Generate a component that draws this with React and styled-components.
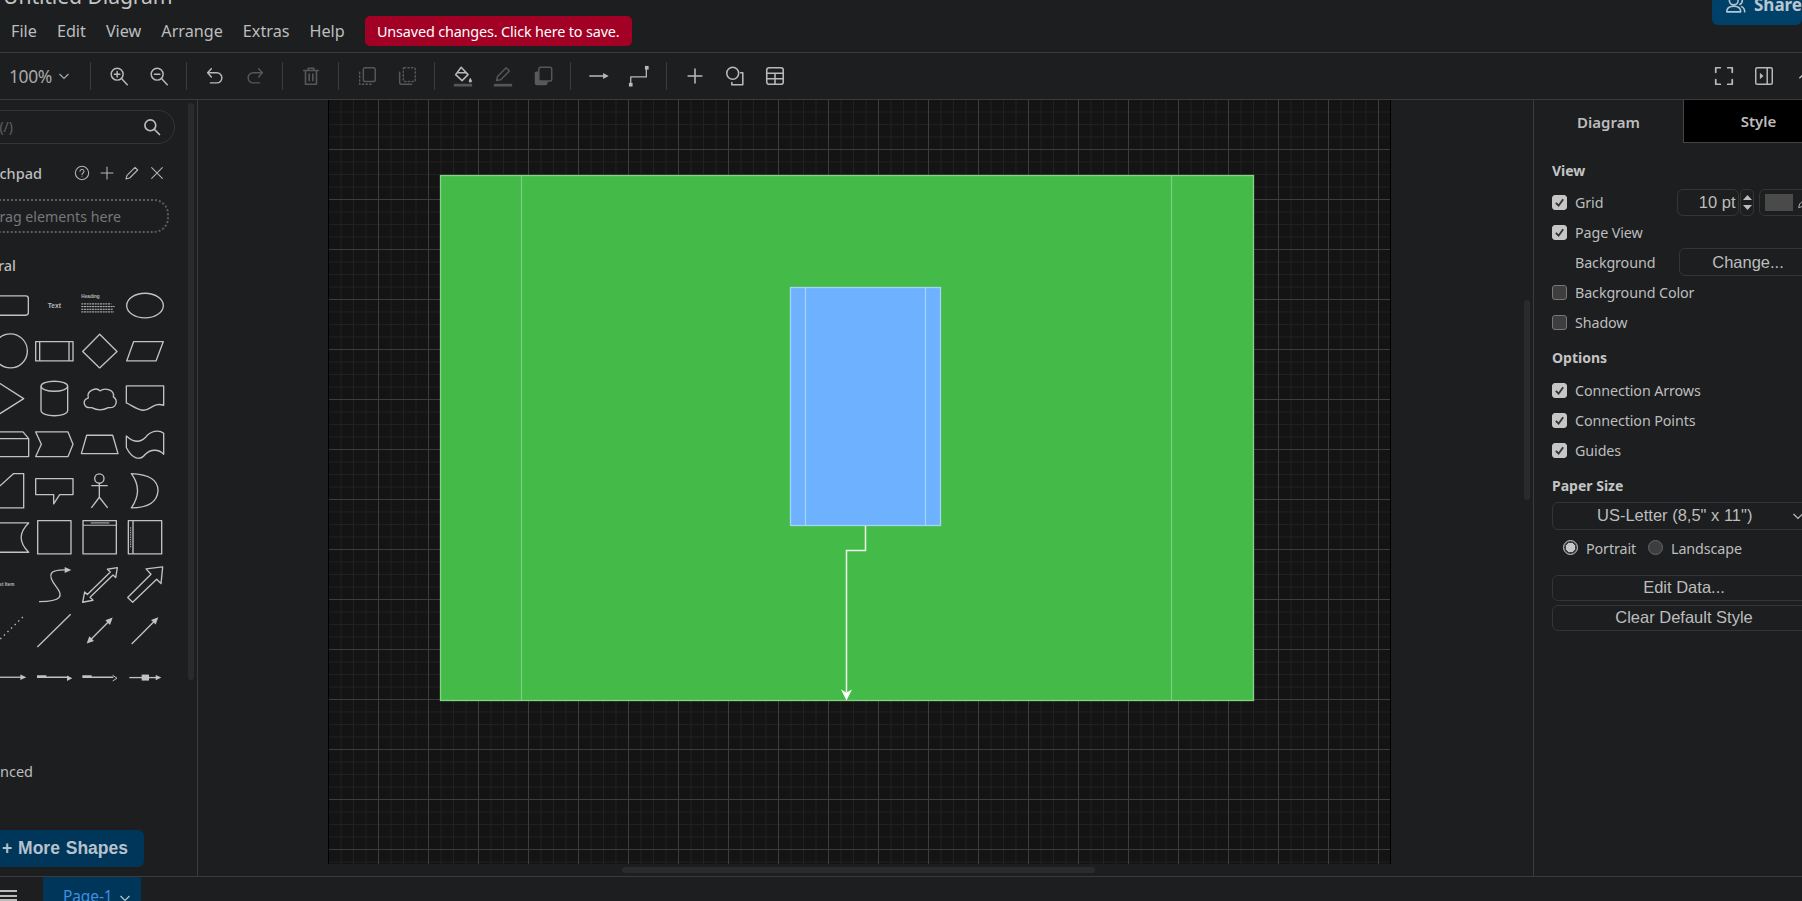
import React from "react";
import styled, { createGlobalStyle } from "styled-components";

const UI = `"Noto Sans", "Open Sans", sans-serif`;
const ARIAL = `"Liberation Sans", Arial, sans-serif`;
const LINE = "#3a3b3d";
const BG = "#1c1e20";

const Global = createGlobalStyle`
  html, body { margin: 0; padding: 0; height: 100%; background: ${BG}; overflow: hidden; }
  #root { height: 100%; }
  * { box-sizing: border-box; }
`;

const Shell = styled.div`
  width: 1802px; height: 901px; overflow: hidden; display: flex; flex-direction: column;
  background: ${BG}; color: #bdbdbd; font-family: ${UI};
`;
const Header = styled.header`
  height: 53px; flex: none; border-bottom: 1px solid ${LINE};
`;
const TopRow = styled.div`
  height: 32px; margin-top: -16px; display: flex; align-items: flex-start; padding-left: 3px;
`;
const Title = styled.div`
  font-size: 21.2px; line-height: 24px; color: #c4c4c4; letter-spacing: -0.1px;
`;
const Share = styled.div`
  margin-left: auto; width: 90px; height: 40.5px; flex: none; background: #00416a; border-radius: 0 0 6px 6px;
  display: flex; align-items: center; gap: 8px; padding-left: 13px; color: #b9c6d0;
  font: bold 17px ${UI}; margin-right: 0;
`;
const MenuRow = styled.nav`
  height: 30px; display: flex; align-items: center; padding-left: 11px;
`;
const MenuItem = styled.span`
  font-size: 16.2px; color: #bdbdbd; margin-right: 20px; letter-spacing: 0;
`;
const SaveBtn = styled.button`
  height: 30px; width: 267px; margin-left: 0; border: 0; border-radius: 5px; background: #a20025; color: #fff;
  font: 14.4px ${UI}; letter-spacing: -0.15px; white-space: nowrap; padding: 0;
`;
const Toolbar = styled.div`
  height: 47px; flex: none; border-bottom: 1px solid ${LINE}; display: flex; align-items: center; padding-left: 9px;
`;
const ZoomLabel = styled.div`
  width: 73.5px; display: flex; align-items: center; gap: 6px; font-size: 17.5px; color: #a8a8a8; letter-spacing: -0.4px;
`;
const Sep = styled.i`
  width: 1px; height: 28px; background: ${LINE}; margin: 0 7.5px; flex: none;
`;
const ToolBtn = styled.span`
  width: 40px; height: 30px; display: flex; align-items: center; justify-content: center; flex: none;
  color: ${(p) => (p.$off ? "#565758" : "#b9b9b9")};
`;
const ToolEnd = styled.div`
  margin-left: auto; display: flex; margin-right: -22px;
`;
const Main = styled.div`
  height: 776px; flex: none; display: flex;
`;
const Sidebar = styled.aside`
  width: 198px; flex: none; border-right: 1px solid ${LINE}; position: relative; overflow: hidden; padding-top: 10px;
`;
const SideScroll = styled.div`
  position: absolute; left: 188px; top: 3px; width: 6px; height: 577px; background: #2a2b2d; border-radius: 3px;
`;
const Search = styled.div`
  margin-left: -40px; width: 215px; height: 33.5px; border: 1px solid #343537; border-radius: 17px;
  display: flex; align-items: center; justify-content: space-between; padding-right: 12px;
`;
const Placeholder = styled.span`
  width: 52px; white-space: nowrap; font-size: 14px; color: #5f6062; display: flex; justify-content: flex-end;
`;
const SectionRow = styled.div`
  margin-left: -40px; margin-top: ${(p) => p.$top}px; height: ${(p) => p.$h}px; display: flex; align-items: center;
`;
const SectionName = styled.div`
  width: ${(p) => p.$w}px; flex: none; display: flex; justify-content: flex-end; white-space: nowrap;
  font-size: 14.5px; font-weight: ${(p) => (p.$thin ? 400 : 500)}; color: #bdbdbd;
`;
const PadTools = styled.div`
  display: flex; margin-left: 27px; color: #b4b4b4;
`;
const PadTool = styled.span`
  width: 25px; height: 20px; display: flex; align-items: center; justify-content: center;
`;
const DragBox = styled.div`
  margin: 14px 0 0 -40px; width: 209px; height: 34px; border: 2px dotted #5c5d5f; border-radius: 15px;
  display: flex; align-items: center; justify-content: flex-end; padding-right: 46px; font-size: 14.2px; color: #77787a; white-space: nowrap;
`;
const ShapeGrid = styled.div`
  margin: 6.75px 0 0 -12.35px; display: grid; grid-template-columns: repeat(4, 44.7px); grid-auto-rows: 46.5px;
`;
const ShapeCell = styled.svg`
  width: 44.7px; height: 46.5px; overflow: visible; fill: none; stroke: #c2c2c2; stroke-width: 4; stroke-linejoin: round;
`;
const MoreBtn = styled.div`
  margin: 49px 0 0 -40px; width: 184px; height: 37px; background: #00365a; border-radius: 6px; display: flex; align-items: center;
  padding-left: 42px; font: bold 17.5px ${ARIAL}; word-spacing: 1px; color: #b6c2cc; white-space: nowrap;
`;
const Canvas = styled.section`
  flex: 1; min-width: 0; position: relative; overflow: hidden; padding-left: 130px;
`;
const Page = styled.div`
  width: 1063px; height: 764px; position: relative; background-color: #141414;
  border-left: 1px solid #000; border-right: 1px solid #000;
  background-image:
    linear-gradient(#3c3c3c 1px, transparent 1px),
    linear-gradient(90deg, #3c3c3c 1px, transparent 1px),
    linear-gradient(#212121 1px, transparent 1px),
    linear-gradient(90deg, #212121 1px, transparent 1px);
  background-size: 50px 50px, 50px 50px, 12.5px 12.5px, 12.5px 12.5px;
  background-position: 0 49px, 49px 0, 0 49px, 49px 0;
`;
const Diagram = styled.svg`
  position: absolute; left: 0; top: 0; width: 1061px; height: 764px;
`;
const VScroll = styled.div`
  position: absolute; left: 1326px; top: 200px; width: 6px; height: 200px; background: #2a2b2d; border-radius: 3px;
`;
const HScroll = styled.div`
  position: absolute; left: 424px; top: 767px; width: 473px; height: 6px; background: #2a2b2d; border-radius: 3px;
`;
const Panel = styled.aside`
  flex: none; width: 269px; border-left: 1px solid ${LINE}; overflow: hidden;
`;
const Tabs = styled.div`
  display: flex; height: 43px;
`;
const Tab = styled.div`
  width: ${(p) => p.$w}px; flex: none; display: flex; align-items: center; justify-content: center; font-size: 15px; font-weight: 600; color: #bdbdbd;
  ${(p) => p.$active ? `background: #000; border-left: 1px solid #444; border-bottom: 1px solid #444;` : ""}
`;
const Body = styled.div`
  padding-left: 18px; width: 300px; font-size: 14.3px;
`;
const Heading = styled.div`
  height: 20px; line-height: 20px; margin-top: ${(p) => p.$top}px; font-weight: 700; font-size: 14px; color: #c4c4c4;
`;
const Row = styled.div`
  height: 30px; display: flex; align-items: center; margin-top: ${(p) => p.$top || 0}px; color: #bdbdbd;
`;
const Check = styled.span`
  width: 15px; height: 15px; flex: none; border-radius: 3px; margin-right: 8px; display: flex; align-items: center; justify-content: center;
  background: ${(p) => (p.$on ? "#c6c6c6" : "#3e3e3e")}; border: 1px solid ${(p) => (p.$on ? "#c6c6c6" : "#777")};
`;
const Label = styled.span`
  padding-left: ${(p) => p.$pad || 0}px; width: ${(p) => (p.$w ? `${p.$w}px` : "auto")}; flex: none; white-space: nowrap; letter-spacing: -0.1px;
`;
const NumInput = styled.div`
  width: 61.5px; height: 27px; margin-left: ${(p) => p.$left}px; border: 1px solid #343537; border-radius: 6px; font: 16.5px ${ARIAL}; color: #bdbdbd;
  display: flex; align-items: center; justify-content: flex-end; padding-right: 2px;
`;
const Spin = styled.div`
  width: 14px; height: 27px; margin-left: 1.5px; border: 1px solid #343537; border-radius: 5px; display: flex; flex-direction: column; align-items: center; justify-content: center; gap: 5px;
`;
const ColorBox = styled.div`
  width: 60px; height: 27px; margin-left: 5px; border: 1px solid #343537; border-radius: 6px; padding: 4px 5px; display: flex; gap: 4px; align-items: center;
`;
const Swatch = styled.span`
  width: 28px; height: 17px; background: #4a4a4a; flex: none;
`;
const WideBtn = styled.div`
  width: ${(p) => p.$w || 264}px; height: ${(p) => p.$h || 26}px; margin-top: ${(p) => p.$top || 0}px; flex: none;
  border: 1px solid #343537; border-radius: 6px; display: flex; align-items: center; justify-content: center;
  font: 16.5px ${ARIAL}; color: #bdbdbd; white-space: nowrap;
`;
const SelectBox = styled(WideBtn)`
  justify-content: flex-start; padding-left: 44px; gap: 40px;
`;
const RadioRow = styled.div`
  height: 30px; margin-top: 4.4px; display: flex; align-items: center; padding-left: 11px; font-size: 14.3px; letter-spacing: -0.1px;
`;
const Radio = styled.span`
  width: 15px; height: 15px; flex: none; border-radius: 50%; margin: -3px 8px 0 ${(p) => p.$left || 0}px;
  background: ${(p) => (p.$on ? "radial-gradient(circle, #c6c6c6 0 4.5px, #3e3e3e 5px)" : "#3e3e3e")};
  border: 1px solid ${(p) => (p.$on ? "#c6c6c6" : "#666")};
`;
const Footer = styled.footer`
  flex: 1; border-top: 1px solid ${LINE}; display: flex; overflow: hidden; position: relative;
`;
const Burger = styled.div`
  width: 17px; margin-top: 13px; height: 11px; flex: none;
  border-top: 2px solid #bbb; border-bottom: 2px solid #bbb; position: relative;
  &::after { content: ""; position: absolute; left: 0; right: 0; top: 2.5px; height: 2px; background: #bbb; }
`;
const PageTab = styled.div`
  margin-left: 26px; width: 98px; height: 30px; background: #00365a; color: #3f8fe0; font-size: 15.5px; letter-spacing: -0.1px;
  display: flex; align-items: flex-start; padding: 9px 0 0 20px; gap: 6px; line-height: 20px;
`;
const TabChevron = styled.span`
  display: flex; margin-top: 6px; color: #b6c2cc;
`;

const Ic = ({ w = 22, h = 22, sw = 1.6, children, fill = "none" }) => (
  <svg width={w} height={h} viewBox="0 0 24 24" fill={fill} stroke="currentColor" strokeWidth={sw} strokeLinecap="round" strokeLinejoin="round">{children}</svg>
);
const Chev = ({ size = 12, up, c = "currentColor" }) => (
  <svg width={size} height={size} viewBox="0 0 12 12" fill="none" stroke={c} strokeWidth="1.2">
    <path d={up ? "M2 8l4-4 4 4" : "M1.5 4l4.5 4.5L10.5 4"} />
  </svg>
);
const Tick = () => (
  <svg width="11" height="11" viewBox="0 0 12 12" fill="none" stroke="#333" strokeWidth="2"><path d="M2 6.500l3 3 5-7" /></svg>
);

const tools = {
  zoomIn: <Ic><circle cx="10" cy="10" r="6.5" /><path d="M15 15l6 6.5M10 7v6M7 10h6" /></Ic>,
  zoomOut: <Ic><circle cx="10" cy="10" r="6.5" /><path d="M15 15l6 6.5M7 10h6" /></Ic>,
  undo: <Ic><path d="M8 4L4 8.500l4 4.500" /><path d="M4.500 8.500H14a5.500 5.500 0 0 1 0 11H7" /></Ic>,
  redo: <Ic><path d="M16 4l4 4.500-4 4.500" /><path d="M19.500 8.500H10a5.500 5.500 0 0 0 0 11h7" /></Ic>,
  trash: <Ic sw={1.8}><path d="M4 6h16M9 6V3.500h6V6M6 6v15h12V6M10 10v7M14 10v7" /></Ic>,
  front: <Ic><rect x="8" y="3" width="13" height="15" rx="2" /><path d="M4 8v13h13" strokeDasharray="1.5 2.500" /></Ic>,
  back: <Ic><rect x="8" y="3" width="13" height="15" rx="1" strokeDasharray="1.500 2.500" /><path d="M4 8v11a2 2 0 0 0 2 2h11" /></Ic>,
  fill: <Ic sw={1.7}><path d="M10 2.500l7.500 8-6.500 6.500-7-6.500z" /><path d="M6.500 8.500h9" /><path d="M20 14c1 1.800 1.700 2.600 1.700 3.500a1.700 1.700 0 0 1-3.400 0c0-.9.700-1.700 1.700-3.500z" fill="currentColor" stroke="none" /><rect x="2" y="20.500" width="20" height="3" fill="#555" stroke="none" /></Ic>,
  line: <Ic><path d="M5 17l1-4.500L15.500 3l3.500 3.500L9.500 16z" /><rect x="2" y="20.500" width="20" height="3" fill="#555" stroke="none" /></Ic>,
  shadow: <Ic><rect x="3" y="7" width="14" height="15" rx="2" fill="#5a5a5a" stroke="none" /><rect x="7.500" y="2.500" width="14" height="15" rx="2" fill="#1c1e20" /></Ic>,
  arrow: <Ic sw={1.6}><path d="M2 12h17" /><path d="M22.500 12l-6 3.200v-6.400z" fill="currentColor" stroke="none" /></Ic>,
  way: <Ic sw={1.4}><path d="M3 21v-8h17V3" /><rect x="1" y="19.500" width="4" height="4" fill="currentColor" stroke="none" /><rect x="18.500" y="1" width="4" height="4" fill="currentColor" stroke="none" /></Ic>,
  plus: <Ic sw={1.7}><path d="M12 4.500v15M4.500 12h15" /></Ic>,
  shape: <Ic sw={1.7}><circle cx="9.500" cy="9" r="6.500" /><path d="M18 8.500h2.500v13H8.500V19" /></Ic>,
  table: <Ic sw={1.7}><rect x="3" y="3" width="18" height="18" rx="2.500" /><path d="M3 9h18M3 15h18M12 9v12" /></Ic>,
  full: <Ic sw={1.9}><path d="M3 8V3h5M16 3h5v5M21 16v5h-5M8 21H3v-5" /></Ic>,
  side: <Ic sw={1.6}><rect x="3" y="3" width="18" height="18" rx="1.500" /><path d="M15.500 3v18" /><path d="M7.500 8.500l4 3.500-4 3.500z" fill="currentColor" stroke="none" /></Ic>,
};

const cols = [30, 164, 298, 432];
const Shape = ({ row, col, children }) => {
  const ys = [615, 757, 894, 135, 275, 415, 552, 692, 830];
  return <ShapeCell viewBox={`${cols[col] - 67} ${ys[row] - 69.75} 134 139.5`}>{children}</ShapeCell>;
};
const Head = ({ pts, open }) => open
  ? <polyline points={pts} strokeWidth="3" />
  : <polygon points={pts} fill="#c2c2c2" stroke="none" />;
const tiny = { fill: "#b8b8b8", stroke: "none", fontFamily: ARIAL };

const shapes = [
  <rect x="-30" y="587" width="114" height="58" rx="8" />,
  <text x="164" y="622" textAnchor="middle" fontSize="20" fontWeight="700" style={tiny}>Text</text>,
  <g><text x="244" y="594" fontSize="14" fontWeight="700" style={tiny}>Heading</text><path d="M244 611h90M244 619h100M244 627h95M244 635h98" strokeWidth="3" strokeDasharray="6 2" /></g>,
  <ellipse cx="434" cy="616" rx="55" ry="37" />,
  <circle cx="30" cy="756" r="51" />,
  <g><rect x="108" y="728" width="112" height="58" /><path d="M120 728v58M208 728v58" /></g>,
  <polygon points="299,706 351,758 299,807 248,758" />,
  <polygon points="400,728 489,728 467,786 379,786" />,
  <polygon points="-40,825 70,895 -40,965" />,
  <g><path d="M124 858v72c0 22 80 22 80 0v-72" /><ellipse cx="164" cy="858" rx="40" ry="15" /></g>,
  <path d="M275 922C250 925 245 900 265 893C258 870 290 860 300 872C315 860 345 870 340 890C355 900 350 925 325 922C310 930 290 930 275 922Z" />,
  <path d="M378 857H490V915C460 905 450 930 430 930C410 930 395 915 378 908Z" />,
  <path d="M-30 98H68L85 118V172H-30ZM-30 118H85" />,
  <polygon points="108,98 205,98 220,135 205,172 108,172 125,135" />,
  <polygon points="260,108 338,108 354,163 244,163" />,
  <path d="M378 110C400 130 420 130 435 115C450 95 475 90 490 102V165C475 148 450 150 435 165C420 185 395 180 378 145Z" />,
  <polygon points="40,222 70,222 70,325 -30,325 -30,258 0,258" />,
  <polygon points="108,237 220,237 220,285 180,285 162,313 162,285 108,285" />,
  <g><circle cx="298" cy="237" r="14" /><path d="M298 251v42M274 258h49M274 325l24-32 25 32" /></g>,
  <path d="M393 222Q473 225 473 273Q470 325 393 325Q430 272 393 222Z" />,
  <path d="M-30 372H85Q40 416 85 460H-30Z" />,
  <rect x="114" y="365" width="100" height="100" />,
  <g><rect x="249" y="365" width="100" height="100" /><path d="M249 379h100M272 372h56" strokeWidth="3" /></g>,
  <g><rect x="384" y="365" width="100" height="100" /><path d="M398 365v100" /><path d="M391 385v60" strokeWidth="3" strokeDasharray="4 3" /></g>,
  <text x="42" y="556" textAnchor="end" fontSize="14" fontWeight="700" style={tiny}>List Item</text>,
  <g><path d="M118 604C190 604 190 585 170 560C140 520 150 508 200 509" /><Head pts="195,500 215,509 195,518" /></g>,
  <polygon points="352,502 347,532 339,524 270,591 279,600 248,606 254,575 262,583 331,515 322,507" />,
  <polygon points="487,500 482,550 469,537 397,606 382,592 452,522 437,506" />,
  <path d="M0 718L70 650" strokeDasharray="4 11" />,
  <path d="M113 742L213 644" />,
  <g><path d="M265 727L333 659" /><Head pts="338,654 330,676 316,662" /><Head pts="260,732 268,710 282,724" /></g>,
  <g><path d="M394 733L468 659" /><Head pts="474,653 466,675 452,661" /></g>,
  <g><path d="M-20 830H65" /><Head pts="78,830 60,822 60,838" /></g>,
  <g><path d="M112 826H140M112 830H205" /><Head pts="218,833 202,825 202,841" /></g>,
  <g><path d="M247 826H275M247 830H340" /><Head open pts="338,824 351,833 338,841" /></g>,
  <g><path d="M387 831H470" /><rect x="424" y="822" width="22" height="18" fill="#c2c2c2" stroke="none" /><Head pts="483,831 466,823 466,839" /></g>,
];

const Box = ({ on, top, children }) => (
  <Row $top={top}>
    <Check $on={on}>{on && <Tick />}</Check>
    <Label>{children}</Label>
  </Row>
);

export default function App() {
  return (
    <Shell>
      <Global />
      <Header>
        <TopRow>
          <Title>Untitled Diagram</Title>
          <Share>
            <Ic w={22} h={22} sw={1.8}><circle cx="10" cy="8" r="5" /><path d="M2 21c0-4.500 3.500-6.500 8-6.500s8 2 8 6.500zM17 3.500a5 5 0 0 1 0 9M19 15c2.500 1 3.500 3 3.500 6" /></Ic>
            Share
          </Share>
        </TopRow>
        <MenuRow>
          {["File", "Edit", "View", "Arrange", "Extras", "Help"].map((m) => <MenuItem key={m}>{m}</MenuItem>)}
          <SaveBtn>Unsaved changes. Click here to save.</SaveBtn>
        </MenuRow>
      </Header>
      <Toolbar>
        <ZoomLabel>100% <Chev size={12} /></ZoomLabel>
        <Sep />
        <ToolBtn>{tools.zoomIn}</ToolBtn><ToolBtn>{tools.zoomOut}</ToolBtn>
        <Sep />
        <ToolBtn>{tools.undo}</ToolBtn><ToolBtn $off>{tools.redo}</ToolBtn>
        <Sep />
        <ToolBtn $off>{tools.trash}</ToolBtn>
        <Sep />
        <ToolBtn $off>{tools.front}</ToolBtn><ToolBtn $off>{tools.back}</ToolBtn>
        <Sep />
        <ToolBtn>{tools.fill}</ToolBtn><ToolBtn $off>{tools.line}</ToolBtn><ToolBtn $off>{tools.shadow}</ToolBtn>
        <Sep />
        <ToolBtn>{tools.arrow}</ToolBtn><ToolBtn>{tools.way}</ToolBtn>
        <Sep />
        <ToolBtn>{tools.plus}</ToolBtn><ToolBtn>{tools.shape}</ToolBtn><ToolBtn>{tools.table}</ToolBtn>
        <ToolEnd>
          <ToolBtn>{tools.full}</ToolBtn><ToolBtn>{tools.side}</ToolBtn><ToolBtn><Chev size={14} up /></ToolBtn>
        </ToolEnd>
      </Toolbar>
      <Main>
        <Sidebar>
          <SideScroll />
          <Search>
            <Placeholder><span>Search Shapes (/)</span></Placeholder>
            <Ic w={20} h={20} sw={2}><circle cx="10" cy="10" r="6.500" /><path d="M15 15l6 6" /></Ic>
          </Search>
          <SectionRow $top={17.5} $h={24}>
            <SectionName $w={82}>Scratchpad</SectionName>
            <PadTools>
              <PadTool><Ic w={16} h={16} sw={1.6}><circle cx="12" cy="12" r="10" /><path d="M9 9.500a3 3 0 1 1 4.500 2.600c-1 .6-1.500 1.200-1.500 2.400M12 17.500v.2" /></Ic></PadTool>
              <PadTool><Ic w={16} h={16} sw={1.6}><path d="M12 3v18M3 12h18" /></Ic></PadTool>
              <PadTool><Ic w={16} h={16} sw={1.7}><path d="M3 21l1.500-5.500L16.500 3.500l4 4L8.500 19.500z" /></Ic></PadTool>
              <PadTool><Ic w={16} h={16} sw={1.6}><path d="M4 4l16 16M20 4L4 20" /></Ic></PadTool>
            </PadTools>
          </SectionRow>
          <DragBox>Drag elements here</DragBox>
          <SectionRow $top={22} $h={20}><SectionName $w={56}>General</SectionName></SectionRow>
          <ShapeGrid>
            {shapes.map((s, i) => <Shape key={i} row={Math.floor(i / 4)} col={i % 4}>{s}</Shape>)}
          </ShapeGrid>
          <SectionRow $top={61} $h={20}><SectionName $w={73} $thin>Advanced</SectionName></SectionRow>
          <MoreBtn>+ More Shapes</MoreBtn>
        </Sidebar>
        <Canvas>
          <Page>
            <Diagram viewBox="329 100 1061 764">
              <rect x="440.5" y="175.5" width="813" height="525" fill="#44ba48" stroke="#86d388" strokeWidth="1.3" />
              <path d="M521.500 175v525M1171.500 175v525" stroke="#7ccf7f" strokeWidth="1.2" fill="none" />
              <rect x="790.5" y="287.500" width="150" height="238" fill="#6db1ff" stroke="#a7d6f0" strokeWidth="1.3" />
              <path d="M805.500 287v239M925.500 287v239" stroke="#a7d6f5" strokeWidth="1.2" fill="none" />
              <path d="M865.500 526v24.500h-19V692" stroke="#ecf7e8" strokeWidth="1.5" fill="none" />
              <polygon points="841,689.500 846.500,692.500 852,689.500 846.500,700.500" fill="#fff" />
            </Diagram>
          </Page>
          <VScroll />
          <HScroll />
        </Canvas>
        <Panel>
          <Tabs>
            <Tab $w={149}>Diagram</Tab>
            <Tab $w={150} $active>Style</Tab>
          </Tabs>
          <Body>
            <Heading $top={18}>View</Heading>
            <Row $top={6}>
              <Check $on><Tick /></Check>
              <Label $w={102}>Grid</Label>
              <NumInput $left={0}>10 pt</NumInput>
              <Spin>
                <svg width="9" height="5" viewBox="0 0 9 5"><path d="M0 5L4.500 0 9 5z" fill="#bdbdbd" /></svg>
                <svg width="9" height="5" viewBox="0 0 9 5"><path d="M0 0L4.500 5 9 0z" fill="#bdbdbd" /></svg>
              </Spin>
              <ColorBox>
                <Swatch />
                <Ic w={14} h={14} sw={1.6}><path d="M3 21l1.500-5.500L16.500 3.500l4 4L8.500 19.500z" /></Ic>
              </ColorBox>
            </Row>
            <Box on>Page View</Box>
            <Row>
              <Label $pad={23} $w={127}>Background</Label>
              <WideBtn $w={138} $h={28}>Change...</WideBtn>
            </Row>
            <Box>Background Color</Box>
            <Box>Shadow</Box>
            <Heading $top={11}>Options</Heading>
            <Box on top={7.7}>Connection Arrows</Box>
            <Box on>Connection Points</Box>
            <Box on>Guides</Box>
            <Heading $top={10}>Paper Size</Heading>
            <SelectBox $top={6.6} $h={27.3}>
              US-Letter (8,5" x 11")
              <Chev size={12} />
            </SelectBox>
            <RadioRow>
              <Radio $on /><Label>Portrait</Label>
              <Radio $left={12} /><Label>Landscape</Label>
            </RadioRow>
            <WideBtn $top={11}>Edit Data...</WideBtn>
            <WideBtn $top={4}>Clear Default Style</WideBtn>
          </Body>
        </Panel>
      </Main>
      <Footer>
        <Burger />
        <PageTab>Page-1 <TabChevron><Chev size={12} /></TabChevron></PageTab>
      </Footer>
    </Shell>
  );
}
